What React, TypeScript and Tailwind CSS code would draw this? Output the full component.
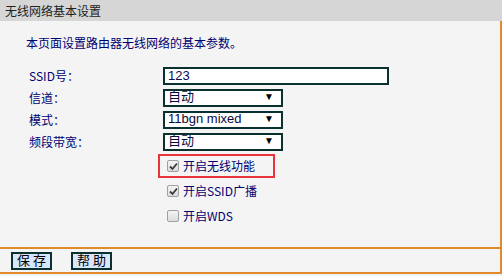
import React from 'react';

const font = { fontFamily: '"Noto Sans CJK SC", "Liberation Sans", sans-serif' };

function Check({ checked }: { checked: boolean }) {
  return (
    <span className="flex h-[12px] w-[12px] items-center justify-center rounded-[2px] border border-[#a0a0a0] bg-gradient-to-b from-[#f4f4f4] to-[#dcdcdc]">
      {checked && (
        <svg width="9" height="9" viewBox="0 0 9 9">
          <path d="M1 4.5 L3.5 7 L8 1.5" fill="none" stroke="#3a3a3a" strokeWidth="1.8" />
        </svg>
      )}
    </span>
  );
}

function Select({ value }: { value: string }) {
  return (
    <div className="flex h-[18px] w-[120px] items-center justify-between overflow-hidden border-2 border-[#0b3030] bg-white pb-[2px] pl-[3px] pr-[7px] text-[13px] leading-[12px] text-[#0a0a40]" style={{ fontFamily: '"Liberation Sans", "Noto Sans CJK SC", sans-serif' }}>
      <span>{value}</span>
      <span className="text-[10px] text-black">▼</span>
    </div>
  );
}

function Row({ label, children }: { label: string; children: React.ReactNode }) {
  return (
    <div className="flex h-[18px] items-center">
      <div className="w-[163px] pl-[29px] text-[12px] text-[#000070]">{label}</div>
      {children}
    </div>
  );
}

export default function App() {
  return (
    <div className="h-[276px] w-[502px] bg-[#f4f4f4]" style={font}>
      <div className="flex h-[21px] items-center bg-[#d6d6d6] pl-[5px] text-[12px] text-[#222]">
        无线网络基本设置
      </div>
      <div className="flex h-[226px] flex-col border-r-2 border-[#e08a2c]">
        <div className="pl-[26px] pt-[14px] text-[12px] leading-[16px] text-[#000070]">
          本页面设置路由器无线网络的基本参数。
        </div>
        <div className="mt-[16px] flex flex-col gap-[4px]">
          <Row label="SSID号：">
            <div className="flex h-[18px] w-[226px] items-center border-2 border-[#0b3030] bg-white pb-[1px] pl-[3px] text-[13px] leading-[12px] text-[#0a0a50]" style={{ fontFamily: '"Liberation Sans", sans-serif' }}>
              123
            </div>
          </Row>
          <Row label="信道：">
            <Select value="自动" />
          </Row>
          <Row label="模式：">
            <Select value="11bgn mixed" />
          </Row>
          <Row label="频段带宽：">
            <Select value="自动" />
          </Row>
        </div>
        <div className="ml-[158px] mt-[3px] flex h-[24px] w-[117px] items-center gap-[4px] border-2 border-[#e8343a] pl-[7px] text-[12px] text-[#000070]">
          <Check checked />
          <span>开启无线功能</span>
        </div>
        <div className="ml-[167px] mt-[6px] flex h-[14px] items-center gap-[4px] text-[12px] text-[#000070]">
          <Check checked />
          <span>开启SSID广播</span>
        </div>
        <div className="ml-[167px] mt-[11px] flex h-[14px] items-center gap-[4px] text-[12px] text-[#000070]">
          <Check checked={false} />
          <span>开启WDS</span>
        </div>
      </div>
      <div className="flex h-[27px] items-center gap-[19px] border-y-2 border-r-2 border-[#e08a2c] pl-[11px]">
        <button className="flex h-[18px] w-[41px] items-center justify-center border-2 border-[#0b3030] bg-[#d8e6fb] pb-[2px] pl-[3px] text-[13px] leading-[12px] tracking-[3px] text-black">
          保存
        </button>
        <button className="flex h-[18px] w-[41px] items-center justify-center border-2 border-[#0b3030] bg-[#d8e6fb] pb-[2px] pl-[3px] text-[13px] leading-[12px] tracking-[3px] text-black">
          帮助
        </button>
      </div>
    </div>
  );
}
